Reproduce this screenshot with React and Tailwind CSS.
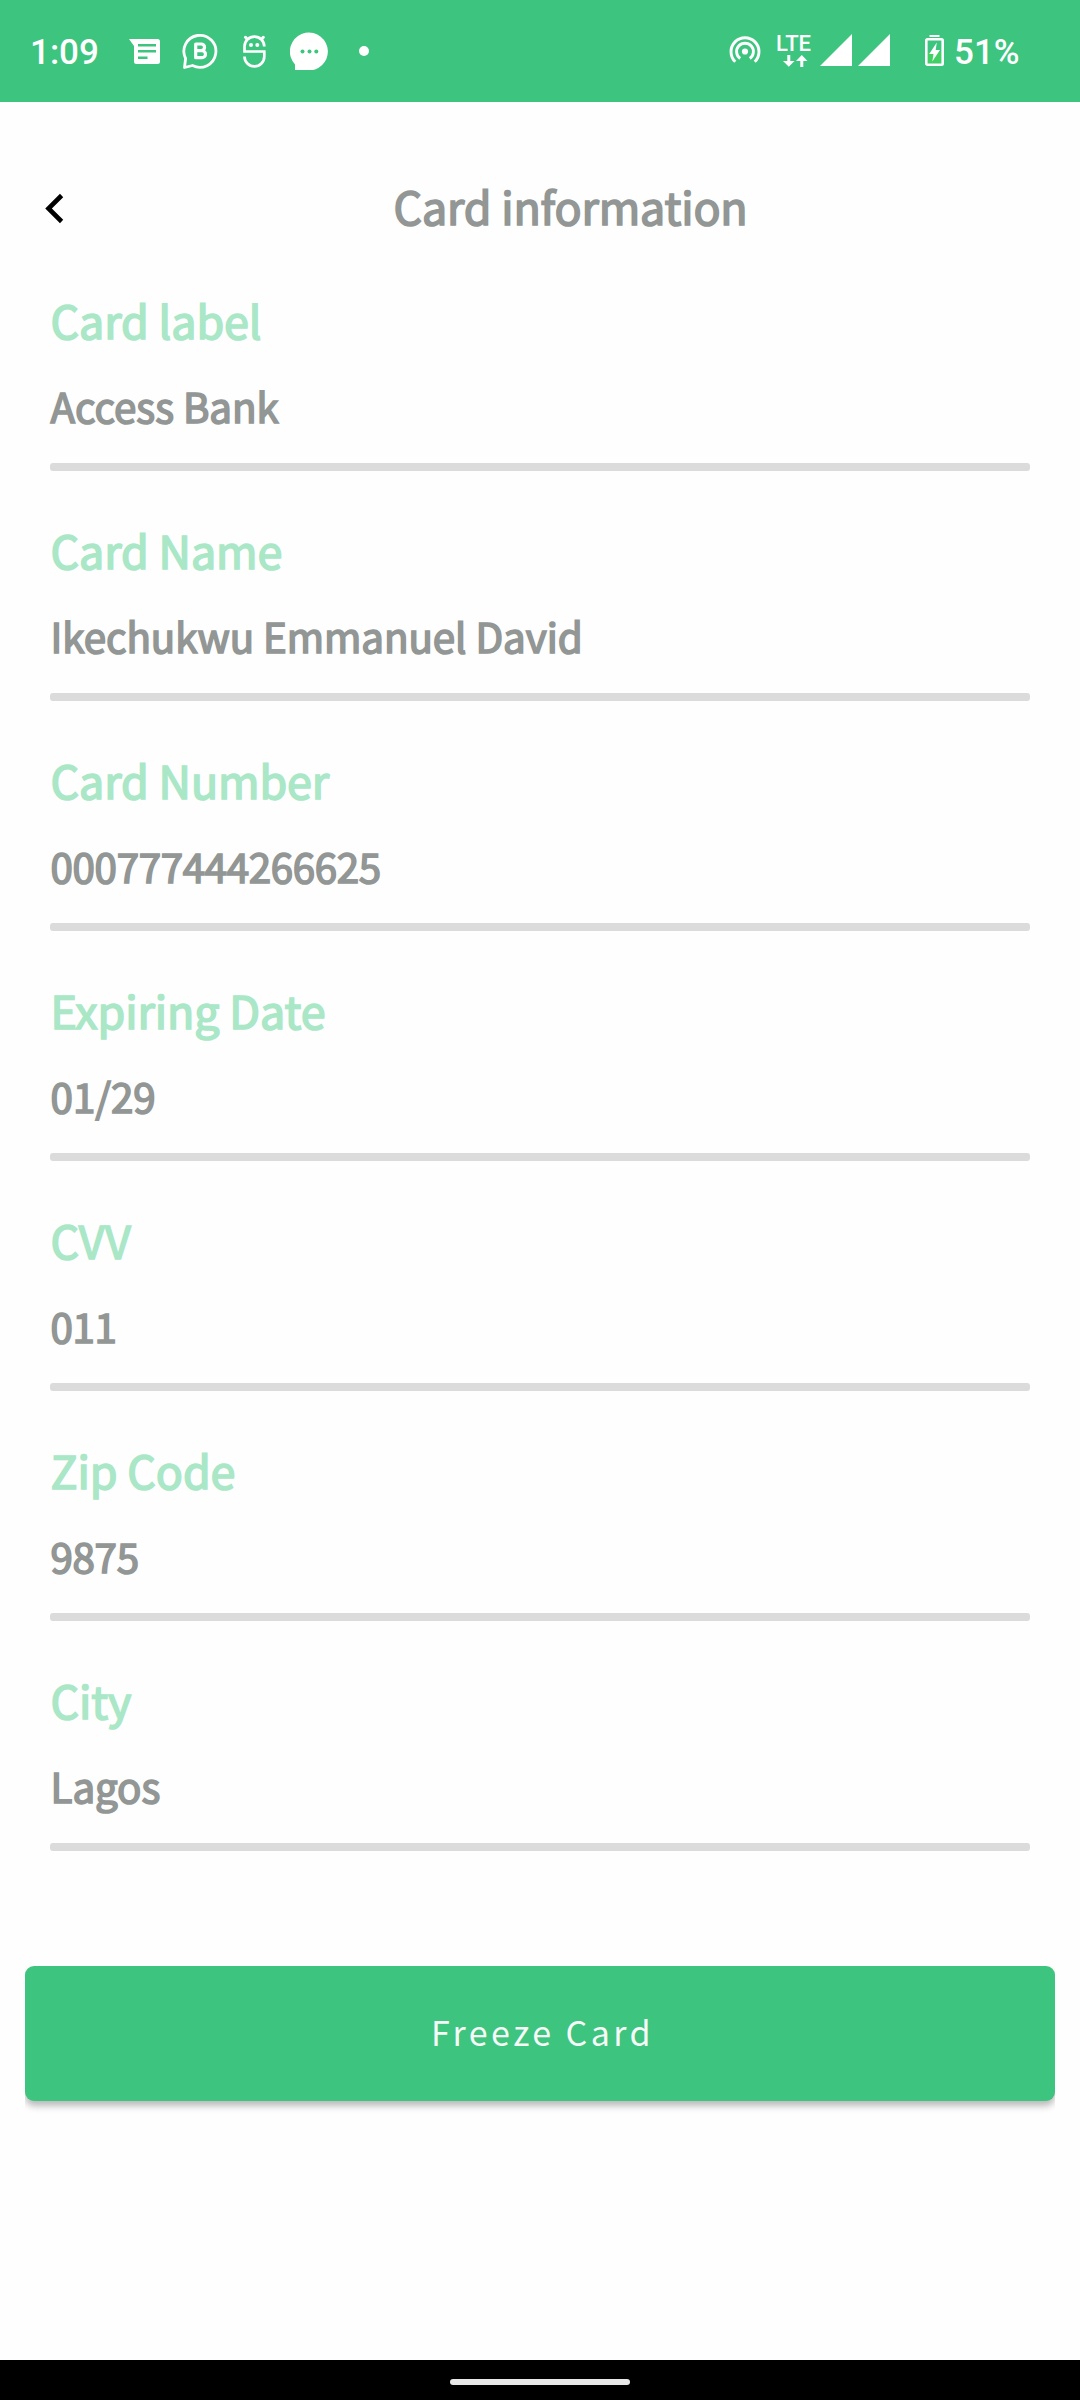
const fields = [
  { label: "Card label", value: "Access Bank" },
  { label: "Card Name", value: "Ikechukwu Emmanuel David" },
  { label: "Card Number", value: "000777444266625", numeric: true },
  { label: "Expiring Date", value: "01/29" },
  { label: "CVV", value: "011", numeric: true },
  { label: "Zip Code", value: "9875", numeric: true },
  { label: "City", value: "Lagos" },
];

function MessagesIcon() {
  return (
    <svg className="ml-[32px] h-[27px] w-[32px] shrink-0" viewBox="0 0 32 27">
      <path fill="#fff" d="M0 1H28.5Q31 1 31 3.500V23.500Q31 26 28.500 26H7.500Q5 26 5 23.500V8Z" />
      <path stroke="#3dc47e" strokeWidth="2.600" d="M9 7.200H27M9 13.200H27M9 19.700H18.500" />
    </svg>
  );
}

function BusinessIcon() {
  return (
    <svg className="ml-[21px] h-[38px] w-[37px] shrink-0" viewBox="0 0 37 38" fill="none" stroke="#fff">
      <path strokeWidth="2.800" strokeLinejoin="round" d="M10.500 33.500A16 16 0 1 0 3.600 26.500L2.500 35.500Z" />
      <path strokeWidth="3.200" strokeLinejoin="round" d="M13.700 12H19.200A3.300 3.300 0 0 1 19.200 18.700H13.700ZM13.700 18.700H20A3.500 3.500 0 0 1 20 25.700H13.700Z" />
    </svg>
  );
}

function MascotIcon() {
  return (
    <svg className="ml-[24px] h-[34px] w-[23px] shrink-0" viewBox="0 0 23 34" fill="none" stroke="#fff">
      <path strokeWidth="2.700" d="M21.300 12.500A9.900 9.900 0 0 0 1.500 12.500V17.500H21.300V22.500A9.900 9.900 0 0 1 1.500 22.500" />
      <path strokeWidth="3" strokeLinecap="round" d="M4 5 2.500 3.300M18.800 5 20.300 3.300" />
      <circle cx="8" cy="11" r="2" fill="#fff" stroke="none" />
      <circle cx="14.300" cy="11" r="2" fill="#fff" stroke="none" />
    </svg>
  );
}

function ChatIcon() {
  return (
    <svg className="ml-[24px] h-[38px] w-[38px] shrink-0" viewBox="0 0 38 38">
      <path fill="#fff" d="M5 38V32.500A19 19 0 1 1 25 37.500Q23 38 21 38Z" />
      <g fill="#3dc47e">
        <circle cx="12.500" cy="19.500" r="2" />
        <circle cx="19.500" cy="19.500" r="2" />
        <circle cx="26.300" cy="19.500" r="2" />
      </g>
    </svg>
  );
}

function HotspotIcon() {
  return (
    <svg className="mb-[4px] h-[28px] w-[32px] shrink-0" viewBox="0 0 32 28" fill="none" stroke="#fff" strokeWidth="2.900">
      <circle cx="16" cy="16.500" r="3.100" fill="#fff" stroke="none" />
      <path d="M11.200 23.500A8.400 8.400 0 1 1 20.800 23.500" />
      <path d="M6.300 26.800A14 14 0 1 1 25.700 26.800" />
    </svg>
  );
}

function LteIcon() {
  return (
    <div className="ml-[15px] flex h-[32px] w-[36px] shrink-0 flex-col">
      <div className="h-[18px] whitespace-nowrap font-[Roboto] text-[22px] font-medium leading-[18px]">LTE</div>
      <svg className="mt-[2px] h-[12px] w-[36px]" viewBox="0 0 36 12" fill="#fff">
        <path d="M11.300 0H14.300V6H18.500L12.800 11.700 7 6H11.300ZM24.300 12H27.300V6H31.500L25.800 0 20 6H24.300Z" />
      </svg>
    </div>
  );
}

function SignalIcon({ className }) {
  return (
    <svg className={className} viewBox="0 0 32 32">
      <path fill="#fff" d="M32 0V32H0Z" />
    </svg>
  );
}

function BatteryIcon() {
  return (
    <svg className="mb-[2px] ml-[35px] h-[31px] w-[19px] shrink-0" viewBox="0 0 19 31">
      <path fill="#fff" d="M4.500 0H14.500V2H4.500Z" />
      <rect x="1.300" y="4.300" width="16.400" height="25.400" rx="1.200" fill="none" stroke="#fff" strokeWidth="2.600" />
      <path fill="#41d162" d="M3 17H16V28H3Z" />
      <path fill="#fff" d="M11.800 7.500 4.200 19H8.500L7.300 26.500 15 15H10.700Z" />
    </svg>
  );
}

function StatusBar() {
  return (
    <div className="flex h-[102px] justify-between bg-[#3dc47e] text-white">
      <div className="flex h-[102px] items-center pl-[30px]">
        <span className="mt-[3px] w-[67px] whitespace-nowrap font-[Roboto] text-[35px] font-medium leading-[42px]">1:09</span>
        <MessagesIcon />
        <BusinessIcon />
        <MascotIcon />
        <ChatIcon />
        <span className="ml-[31px] size-[10px] rounded-full bg-white" />
      </div>
      <div className="flex h-[102px] items-center pr-[59px]">
        <HotspotIcon />
        <LteIcon />
        <SignalIcon className="mb-[2px] ml-[8px] size-[32px] shrink-0" />
        <SignalIcon className="mb-[2px] ml-[6px] size-[32px] shrink-0" />
        <BatteryIcon />
        <span className="ml-[10px] mt-[3px] w-[67px] whitespace-nowrap font-[Roboto] text-[35px] font-medium leading-[42px]">51%</span>
      </div>
    </div>
  );
}

export default function App() {
  return (
    <div className="flex h-[2400px] w-[1080px] flex-col bg-[#fefefe] font-['Noto_Sans_CJK_SC',sans-serif]">
      <StatusBar />
      <header className="mt-[74px] flex h-[60px] items-center pl-[44px]">
        <button aria-label="Back" className="w-[22px] pt-[4px]">
          <svg className="h-[32px] w-[22px]" viewBox="0 0 22 32" fill="none" stroke="#000" strokeWidth="4.600">
            <path d="M17.600 3.500 4.500 16.500 17.600 29.500" />
          </svg>
        </button>
        <h1 className="ml-[327.500px] whitespace-nowrap text-[44.8px] leading-[60px] tracking-[-0.15px] text-[#929694] [-webkit-text-stroke:1.6px_#929694]">Card information</h1>
      </header>
      <main className="mt-[54px] flex flex-col gap-[48px] px-[50px]">
        {fields.map(({ label, value, numeric }) => (
          <section key={label} className="flex h-[182px] flex-col">
            <h2 className="ml-[0.5px] whitespace-nowrap text-[44.8px] leading-[60px] tracking-[-0.08px] text-[#a9e7c7] [-webkit-text-stroke:1.6px_#a9e7c7]">{label}</h2>
            <p className={`ml-[0.6px] mt-[26px] whitespace-nowrap text-[40.3px] leading-[60px] text-[#929694] [-webkit-text-stroke:1.6px_#929694] ${numeric ? "tracking-[-0.35px]" : "tracking-[-0.06px]"}`}>{value}</p>
            <div className="mt-[27px] h-[8px] rounded-[3px] bg-[#dbdbdb]" />
          </section>
        ))}
      </main>
      <button className="mx-[25px] mt-[114px] flex h-[135px] items-center justify-center rounded-[9px] bg-[#3dc47e] pb-[3px] pl-[5px] text-[34px] leading-[60px] tracking-[3.4px] text-[#f5f9f7] shadow-[0_5px_7px_rgba(0,0,0,0.27)] [clip-path:inset(0_0_-20px_0)]">
        Freeze Card
      </button>
      <footer className="mt-auto flex h-[40px] justify-center bg-black pt-[19px]">
        <div className="h-[6px] w-[180px] rounded-full bg-[#e8e8e8]" />
      </footer>
    </div>
  );
}
